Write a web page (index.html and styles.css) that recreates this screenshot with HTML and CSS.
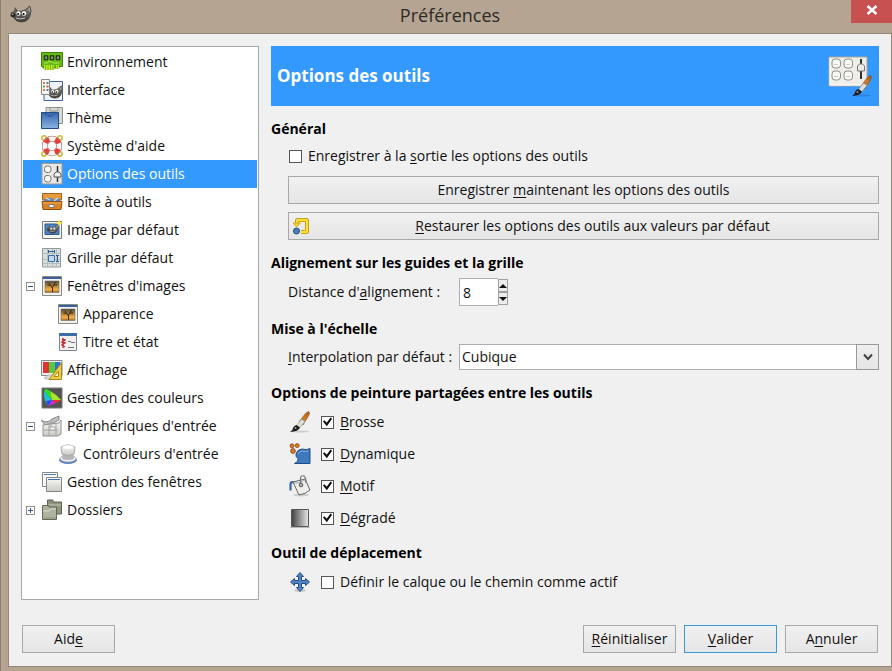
FILE: index.html
```html
<!DOCTYPE html>
<html lang="fr">
<head>
<meta charset="utf-8">
<title>Préférences</title>
<link rel="stylesheet" href="styles.css">
</head>
<body>
<svg class="defs" aria-hidden="true">
  <defs>
    <linearGradient id="fur" x1="0" y1="0" x2="0" y2="1"><stop offset="0" stop-color="#8a8782"/><stop offset="1" stop-color="#3c3a37"/></linearGradient>
    <linearGradient id="blue" x1="0" y1="0" x2="0" y2="1"><stop offset="0" stop-color="#3468ae"/><stop offset="1" stop-color="#8cb3e2"/></linearGradient>
    <linearGradient id="metal" x1="0" y1="0" x2="0" y2="1"><stop offset="0" stop-color="#fbfbf9"/><stop offset="1" stop-color="#c9cbc6"/></linearGradient>
    <linearGradient id="sunset" x1="0" y1="0" x2="0" y2="1"><stop offset="0" stop-color="#4d4a45"/><stop offset=".45" stop-color="#b98534"/><stop offset=".75" stop-color="#f5b243"/><stop offset="1" stop-color="#9b6420"/></linearGradient>
    <linearGradient id="ramp"><stop offset="0" stop-color="#404040"/><stop offset="1" stop-color="#e8e8e8"/></linearGradient>
    <linearGradient id="wood" x1="0" y1="1" x2="1" y2="0"><stop offset="0" stop-color="#8c4a14"/><stop offset=".5" stop-color="#cf7c2c"/><stop offset="1" stop-color="#a55a17"/></linearGradient>
    <symbol id="wilber" viewBox="0 0 22 22">
      <path d="M3 9Q5 7 7 8Q11 9 15 7Q17 5 20 3Q22 8 20 13Q18 19 11 19Q6 19 3 14Q0 14 1 11Q1 9 3 9Z" fill="url(#fur)" stroke="#3d3b38" stroke-width=".7"/>
      <path d="M4 8L5 4L8 8Z" fill="#5c5853"/>
      <path d="M18 7L20 4L20 9Z" fill="#aaa7a1"/>
      <ellipse cx="8.500" cy="10.500" rx="2" ry="2.200" fill="#fff"/><ellipse cx="14" cy="10.500" rx="2.200" ry="2.300" fill="#fff"/>
      <circle cx="8.200" cy="11" r="1"/><circle cx="13.600" cy="11" r="1.100"/>
      <ellipse cx="3.300" cy="12" rx="2.200" ry="2" fill="#222"/><circle cx="2.800" cy="11.300" r=".7" fill="#ddd"/>
      <path d="M6 15Q10 17 15 15" fill="none" stroke="#c9c5bd"/>
    </symbol>
    <symbol id="brush" viewBox="0 0 22 22">
      <ellipse cx="11" cy="20.500" rx="9" ry="1" fill="#000" opacity=".15"/>
      <path d="M19.500 .5Q21 1 20 4L14 14L10 11L16 3Q18 1 19.500 .5Z" fill="url(#wood)" stroke="#87501f" stroke-width=".6"/>
      <path d="M12.500 8L16 10.500L10.500 17L7.500 14.500Z" fill="#dfdfda" stroke="#8b8b86" stroke-width=".6"/>
      <path d="M7.500 14L11 16.500Q9.500 20.500 1 21Q4 19.500 4.200 16.500Q5 14.500 7.500 14Z" fill="#1e1e1e"/>
      <circle cx="6.500" cy="17" r="1" fill="#999"/>
    </symbol>
    <symbol id="picture" viewBox="0 0 22 22">
      <path d="M1.500 1.500H20.500V20.500H1.500Z" fill="#f2f2ef" stroke="#888a85"/><path d="M2 2H20V4H2Z" fill="#38609d"/>
      <path d="M4 6H18V17.500H4Z" fill="url(#sunset)" stroke="#77706a" stroke-width=".6"/>
      <path d="M11.500 17V12M11.500 13L8 8M11.500 12L14.500 7M9.500 10.500L6.500 10M13 10H16" stroke="#2c2114" stroke-width=".9" fill="none"/>
    </symbol>
    <symbol id="env" viewBox="0 0 22 22">
      <path d="M.5 1.500H21.500V15.500H18V17H2V15.500H.5Z" fill="#67b914" stroke="#3f820c"/>
      <path d="M3 4.500H7V9H3ZM9 4.500H13V9H9ZM15 4.500H19V9H15Z" fill="#2d3d24" stroke="#173609" stroke-width=".6"/>
      <path d="M5 5.500V8M11 5.500V8M17 5.500V8" stroke="#e6efdc"/><path d="M3 12H6L8 10.500H10L12 12H18" fill="none" stroke="#b5e455"/>
      <path d="M3 14H13V19H3ZM15 14H18V18H15Z" fill="#b8e92b"/><path d="M4.500 14V19M7 14V19M9.500 14V19M12 14V19M16.500 14V18" stroke="#5a9a10" stroke-width=".6"/>
    </symbol>
    <symbol id="interface" viewBox="0 0 22 22">
      <path d="M3 2.500H21.500V21.500H3Z" fill="#edf2f8" stroke="#42658f"/><use href="#wilber" x="5" y="4" width="17" height="18"/>
      <path d="M.5 .5H8.500V15.500H.5Z" fill="#f4f4f1" stroke="#888a85"/>
      <path d="M2 3H4V5H2ZM2 10H4V12H2Z" fill="#dd7b38"/><path d="M5.500 3H7.500V5H5.500ZM5.500 10H7.500V12H5.500Z" fill="#4b79b8"/><path d="M2 6.500H4V8.500H2Z" fill="#75a45c"/><path d="M5.500 6.500H7.500V8.500H5.500Z" fill="#cf5555"/>
    </symbol>
    <symbol id="theme" viewBox="0 0 22 22">
      <path d="M5 .5H21.500V16.500H5Z" fill="#d6d8d2" stroke="#8f918c"/><path d="M9 1V4H17V1M11 5H15" fill="none" stroke="#9a9c96"/>
      <path d="M.5 5.500H17.500V21.500H.5Z" fill="url(#blue)" stroke="#244b7d"/><path d="M4.500 5.500V8H13.500V5.500M7 9.500H11" fill="none" stroke="#2b5793" stroke-width=".8"/>
    </symbol>
    <symbol id="help" viewBox="0 0 22 22">
      <g fill="none" stroke="#d6b72e" stroke-width="1.500"><circle cx="3" cy="3" r="2.200"/><circle cx="19" cy="3" r="2.200"/><circle cx="3" cy="19" r="2.200"/><circle cx="19" cy="19" r="2.200"/></g>
      <circle cx="11" cy="11" r="7.200" fill="none" stroke="#8b5a57" stroke-width="6"/><circle cx="11" cy="11" r="7.200" fill="none" stroke="#f6f3f0" stroke-width="5"/>
      <circle cx="11" cy="11" r="7.200" fill="none" stroke="#e63f3a" stroke-width="4.800" stroke-dasharray="5.200 6.110" stroke-dashoffset="-3.055"/>
    </symbol>
    <symbol id="options" viewBox="0 0 22 22">
      <path d="M1 .5H21V21H1Z" fill="#e8e8e4" stroke="#9b9b93"/><rect x="3.500" y="3" width="6.500" height="6.500" rx="2.500" fill="#f8f8f6" stroke="#777"/><rect x="3.500" y="12.500" width="6.500" height="6.500" rx="2.500" fill="#f8f8f6" stroke="#777"/>
      <path d="M16.500 3V19" stroke="#333" stroke-width="1.500"/><path d="M13 14V11L15 9H18L20 11V14Z" fill="#eee" stroke="#555"/>
    </symbol>
    <symbol id="toolbox" viewBox="0 0 22 22">
      <path d="M1.500 2.500H20.500V9H1.500Z" fill="#e49b3d" stroke="#a26018"/><path d="M2 11L5 7H10L13 8.500L18 7L20 11Z" fill="#5d87bd"/><path d="M5 7L9 9M17 7L13 10" stroke="#d9dcde" stroke-width="1.200"/>
      <path d="M1 10.500H21L20 18.500H2Z" fill="#d8852a" stroke="#955111"/><path d="M8 16.500V13.500H13V16.500Z" fill="#eee" stroke="#8c7c68"/><path d="M2 12H20" stroke="#efad59"/>
    </symbol>
    <symbol id="image" viewBox="0 0 22 22">
      <path d="M1.500 2.500H20.500V19.500H1.500Z" fill="#f4f4f1" stroke="#777a76"/><path d="M4 5H18V15.500H4Z" fill="#4c83c4" stroke="#32588b"/><use href="#wilber" x="5" y="4" width="13" height="12"/>
      <path d="M18 0L19 3L22 4L19 5L18 8L17 5L14 4L17 3Z" fill="#fce94f"/>
    </symbol>
    <symbol id="grid" viewBox="0 0 22 22">
      <path d="M1.500 1.500H19.500V20H1.500Z" fill="#d9dfdf" stroke="#929b99"/><path d="M2 6.500H19M2 12.500H19M2 16.500H19M6.500 2V20M11.500 2V20M15.500 2V20" stroke="#b4bcbb"/><path d="M7.500 8.500H13.500V14.500H7.500Z" fill="#c5d8ed" stroke="#376da9"/><path d="M7 4.500H14M7.500 3V6M13.500 3V6M16.500 8V14M15 8.500H18M15 14.500H18" stroke="#285c9a" fill="none"/>
    </symbol>
    <symbol id="titlebar" viewBox="0 0 22 22">
      <path d="M2.500 2.500H19.500V19.500H2.500Z" fill="#f0f0f1" stroke="#7f848b"/><path d="M2 2H20V5H2Z" fill="#3d6da9"/><path d="M5 8L8 9L5 11L8 12L5 14L8 16M6 7V17" stroke="#cc2531" fill="none" stroke-width="1.400"/><path d="M11 10.500H14M14 11.500H18M11 16.500H17" stroke="#71757b"/>
    </symbol>
    <symbol id="display" viewBox="0 0 22 22">
      <path d="M.5 1.500H21V16.500H.5Z" fill="#eee" stroke="#888"/><path d="M2 3H8V14H2Z" fill="#e33434"/><path d="M8 3H14V14H8Z" fill="#59c941"/><path d="M14 3H19.500V14H14Z" fill="#3674cc"/><path d="M3 19L7 16H14V20H4Z" fill="#d9d9d6" stroke="#999" stroke-width=".5"/>
      <path d="M20.500 4V20.500H8Z" fill="#efcd45" stroke="#a8871c"/><path d="M17.500 12V17.500H13Z" fill="#fff5bd" stroke="#a8871c"/>
    </symbol>
    <symbol id="color" viewBox="0 0 22 22">
      <path d="M1 1H21V21H1Z" fill="#535353" stroke="#777"/><path d="M3 4Q4 0 9 4L11 13Z" fill="#27df24"/><path d="M9 4Q15 7 20 13L11 13Z" fill="#a7e723"/><path d="M11 13L20 13L15 16Z" fill="#f13325"/><path d="M11 13L15 16L7 19Z" fill="#d329d9"/><path d="M11 13L7 19Q2 12 3 4Z" fill="#26bdd3"/><path d="M11 13L7 19L5 14Z" fill="#2843ef"/>
    </symbol>
    <symbol id="device" viewBox="0 0 22 22">
      <path d="M0 5Q6 9 11 4L18 1V5L12 8L4 10Z" fill="#bfc0bd" stroke="#8a8a8a"/><path d="M2 10L18 8L20 5V19L17 21H2Z" fill="url(#metal)" stroke="#90918e"/><path d="M8 10V21M15 9V20M3 15H17M10 5V12" stroke="#a4a5a1"/><path d="M9 12H14V15H9Z" fill="#fafafa" stroke="#aaa"/>
    </symbol>
    <symbol id="controller" viewBox="0 0 22 22">
      <ellipse cx="11" cy="17" rx="9" ry="4" fill="#5f83c2"/><ellipse cx="11" cy="15.500" rx="8" ry="3.500" fill="#edf0f4" stroke="#999" stroke-width=".6"/><path d="M6 10H16L17 16Q11 18 5 16Z" fill="#b5b5b5"/><path d="M4 4Q11 0 18 4L17 11Q11 14 5 11Z" fill="url(#metal)" stroke="#aaa"/><ellipse cx="11" cy="4" rx="5.500" ry="1.800" fill="#fff"/>
    </symbol>
    <symbol id="windows" viewBox="0 0 22 22">
      <path d="M1.500 1.500H16.500V15.500H1.500Z" fill="#fafafa" stroke="#858783"/><path d="M3 3.500H15" stroke="#557ca9"/><path d="M5.500 6.500H20.500V20.500H5.500Z" fill="url(#metal)" stroke="#858783"/><path d="M7 8.500H19" stroke="#3f70af"/>
    </symbol>
    <symbol id="folders" viewBox="0 0 22 22">
      <path d="M6.500 4V1H12V3H20.500V15H6.500Z" fill="#8f947f" stroke="#5d6152"/><path d="M7 6H20" stroke="#c4c7b7"/><path d="M1.500 9V6.500H8V8H15.500V20.500H1.500Z" fill="#aeb39e" stroke="#636854"/><path d="M2 12H8L10 10H15" stroke="#dde0d1" fill="none"/><path d="M3 19H15" stroke="#88907a"/>
    </symbol>
    <symbol id="reset" viewBox="0 0 18 18">
      <path d="M5 8V4Q5 3 6 3H14Q15 3 15 4V14Q15 15 14 15H9" fill="none" stroke="#b79200" stroke-width="4"/><path d="M5 8V4Q5 3 6 3H14Q15 3 15 4V14Q15 15 14 15H9" fill="none" stroke="#ffe03b" stroke-width="2.400"/><path d="M1 6H8.500L4.500 10Z" fill="#f8d62d" stroke="#b79200" stroke-width=".6"/><circle cx="4.500" cy="14" r="3" fill="#4c7ebd" stroke="#294e80"/>
    </symbol>
    <symbol id="dynamics" viewBox="0 0 22 22">
      <path d="M7 11Q8 6.500 13 6Q18 7.500 21 5.500V20.500H5.500Q10 18.500 9 15.500Q6.500 14 7 11Z" fill="#3e78bd" stroke="#1e4c88"/><path d="M9 11Q10 8 13 8Q17 9 19.500 8" stroke="#80a9db" fill="none"/><g fill="#d77b25" stroke="#874410" stroke-width=".8"><circle cx="3" cy="2.800" r="2"/><circle cx="8.200" cy="2.600" r="2"/><circle cx="4" cy="8" r="2.400"/></g>
    </symbol>
    <symbol id="bucket" viewBox="0 0 22 22">
      <ellipse cx="12" cy="20" rx="8" ry="1.500" fill="#000" opacity=".14"/><path d="M5 7.500Q1.500 6.500 1.500 9V15.500" fill="none" stroke="#3767a5" stroke-width="2.200"/><path d="M4 7L16 4L21 15Q17 19 10 20Z" fill="#eeeeeb" stroke="#666"/><path d="M5 8Q10 9 16 5" fill="none" stroke="#aaa"/><path d="M11.500 10V3Q12 0 15 1Q17 2 17 8" fill="none" stroke="#777" stroke-width="1.200"/><circle cx="12" cy="10" r="1.800" fill="#bbb" stroke="#555"/>
    </symbol>
    <symbol id="gradient" viewBox="0 0 22 22"><path d="M1 20H21V21H1Z" fill="#bbb"/><path d="M2.500 2.500H19.500V19.500H2.500Z" fill="url(#ramp)" stroke="#555"/></symbol>
    <symbol id="move" viewBox="0 0 22 22">
      <ellipse cx="11" cy="19.500" rx="6" ry="1.500" fill="#000" opacity=".18"/><path d="M11 1.500L14.500 5.500H12.500V9.500H16.500V7.500L20.500 11L16.500 14.500V12.500H12.500V16.500H14.500L11 20.500L7.500 16.500H9.500V12.500H5.500V14.500L1.500 11L5.500 7.500V9.500H9.500V5.500H7.500Z" fill="#4f83c4" stroke="#274f87"/>
    </symbol>
    <symbol id="panel" viewBox="0 0 46 44">
      <path d="M2 3H40V32H2Z" fill="#efeee9" stroke="#aaa79c"/><path d="M3 31H39M3 4V31" stroke="#fff"/>
      <g fill="#f8f8f6" stroke="#77756f" stroke-width=".8"><rect x="5" y="5" width="8.500" height="9" rx="3"/><rect x="17" y="5" width="8.500" height="9" rx="3"/><rect x="5" y="17" width="8.500" height="9" rx="3"/><rect x="17" y="17" width="8.500" height="9" rx="3"/></g>
      <path d="M7 10.500H11M19 10.500H23M7 22.500H11M19 22.500H23" stroke="#ccc"/><path d="M34 5V25" stroke="#30302e" stroke-width="2"/><path d="M30.500 17V12L32.500 10H35.500L37.500 12V17Z" fill="#ecece8" stroke="#777"/>
      <use href="#brush" x="24" y="21" width="22" height="22"/>
    </symbol>
  </defs>
</svg>
<div class="window">
  <header class="titlebar">
    <svg class="icon" aria-hidden="true"><use href="#wilber"/></svg>
    <h1>Préférences</h1>
    <button class="close" type="button" aria-label="Fermer"><svg viewBox="0 0 12 10" aria-hidden="true"><path d="M1.500 1L10.500 9M10.500 1L1.500 9"/></svg></button>
  </header>
  <main class="client">
    <div class="body">
      <nav class="tree" aria-label="Catégories">
        <ul>
          <li class="row"><a href="#"><svg class="icon"><use href="#env"/></svg>Environnement</a></li>
          <li class="row"><a href="#"><svg class="icon"><use href="#interface"/></svg>Interface</a></li>
          <li class="row"><a href="#"><svg class="icon"><use href="#theme"/></svg>Thème</a></li>
          <li class="row"><a href="#"><svg class="icon"><use href="#help"/></svg>Système d'aide</a></li>
          <li class="row selected"><a href="#" aria-current="page"><svg class="icon"><use href="#options"/></svg>Options des outils</a></li>
          <li class="row"><a href="#"><svg class="icon"><use href="#toolbox"/></svg>Boîte à outils</a></li>
          <li class="row"><a href="#"><svg class="icon"><use href="#image"/></svg>Image par défaut</a></li>
          <li class="row"><a href="#"><svg class="icon"><use href="#grid"/></svg>Grille par défaut</a></li>
          <li class="row"><button class="twisty" type="button" aria-expanded="true" aria-label="Replier"></button><a href="#"><svg class="icon"><use href="#picture"/></svg>Fenêtres d'images</a></li>
          <li class="row child"><a href="#"><svg class="icon"><use href="#picture"/></svg>Apparence</a></li>
          <li class="row child"><a href="#"><svg class="icon"><use href="#titlebar"/></svg>Titre et état</a></li>
          <li class="row"><a href="#"><svg class="icon"><use href="#display"/></svg>Affichage</a></li>
          <li class="row"><a href="#"><svg class="icon"><use href="#color"/></svg>Gestion des couleurs</a></li>
          <li class="row"><button class="twisty" type="button" aria-expanded="true" aria-label="Replier"></button><a href="#"><svg class="icon"><use href="#device"/></svg>Périphériques d'entrée</a></li>
          <li class="row child"><a href="#"><svg class="icon"><use href="#controller"/></svg>Contrôleurs d'entrée</a></li>
          <li class="row"><a href="#"><svg class="icon"><use href="#windows"/></svg>Gestion des fenêtres</a></li>
          <li class="row"><button class="twisty" type="button" aria-expanded="false" aria-label="Déplier"></button><a href="#"><svg class="icon"><use href="#folders"/></svg>Dossiers</a></li>
        </ul>
      </nav>
      <form class="page" id="prefs">
        <div class="banner"><h2>Options des outils</h2><svg aria-hidden="true"><use href="#panel"/></svg></div>
        <section>
          <h3>Général</h3>
          <div class="stack">
            <div class="check"><input type="checkbox" id="save"><label for="save">Enregistrer à la <u>s</u>ortie les options des outils</label></div>
            <button class="btn" type="button">Enregistrer <u>m</u>aintenant les options des outils</button>
            <button class="btn with-icon" type="button"><svg aria-hidden="true"><use href="#reset"/></svg><span><u>R</u>estaurer les options des outils aux valeurs par défaut</span></button>
          </div>
        </section>
        <section>
          <h3>Alignement sur les guides et la grille</h3>
          <div class="field"><label for="snap">Distance d'<u>a</u>lignement :</label>
            <div class="spin"><input id="snap" type="text" inputmode="numeric" value="8"><div class="steps"><button type="button" aria-label="Augmenter"></button><button type="button" aria-label="Diminuer"></button></div></div>
          </div>
        </section>
        <section>
          <h3>Mise à l'échelle</h3>
          <div class="field"><label for="interp"><u>I</u>nterpolation par défaut :</label>
            <div class="combo"><select id="interp"><option>Cubique</option></select><span class="arrow"><svg viewBox="0 0 10 8" aria-hidden="true"><path d="M1 1.500L5 6L9 1.500"/></svg></span></div>
          </div>
        </section>
        <section>
          <h3>Options de peinture partagées entre les outils</h3>
          <div class="stack checks">
            <div class="check"><svg class="icon"><use href="#brush"/></svg><input type="checkbox" id="b" checked><label for="b"><u>B</u>rosse</label></div>
            <div class="check"><svg class="icon"><use href="#dynamics"/></svg><input type="checkbox" id="d" checked><label for="d"><u>D</u>ynamique</label></div>
            <div class="check"><svg class="icon"><use href="#bucket"/></svg><input type="checkbox" id="m" checked><label for="m"><u>M</u>otif</label></div>
            <div class="check"><svg class="icon"><use href="#gradient"/></svg><input type="checkbox" id="g" checked><label for="g"><u>D</u>égradé</label></div>
          </div>
        </section>
        <section>
          <h3>Outil de déplacement</h3>
          <div class="stack checks">
            <div class="check"><svg class="icon"><use href="#move"/></svg><input type="checkbox" id="mv"><label for="mv">Définir le calque ou le chemin comme actif</label></div>
          </div>
        </section>
      </form>
    </div>
    <footer class="actions">
      <button class="btn help" type="button">Aid<u>e</u></button>
      <button class="btn" type="reset" form="prefs"><u>R</u>éinitialiser</button>
      <button class="btn default" type="submit" form="prefs"><u>V</u>alider</button>
      <button class="btn" type="button">A<u>n</u>nuler</button>
    </footer>
  </main>
</div>
</body>
</html>
```
FILE: styles.css
```css
* { box-sizing: border-box; }
body {
  margin: 0;
  background: #b5a492;
  color: #111;
  font: 14px/20px "Open Sans", "Noto Sans", sans-serif;
}
button, input, select { font: inherit; color: inherit; margin: 0; padding: 0; border-radius: 0; }
u { text-decoration: underline; text-underline-offset: 2px; text-decoration-skip-ink: none; }
.defs { position: absolute; width: 0; height: 0; }
.icon { width: 22px; height: 22px; flex: none; display: block; }

.window {
  display: flex;
  flex-direction: column;
  min-height: 100vh;
  padding: 0 0 4px 7px;
  border-left: 1px solid #8c7c6d;
}
.titlebar {
  display: grid;
  grid-template-columns: 41px 1fr 41px;
  height: 33px;
}
.titlebar .icon { margin: 3px 0 0 2px; }
.titlebar h1 {
  margin: 0;
  font-size: 18px;
  font-weight: 400;
  line-height: 30px;
  text-align: center;
  color: #2e2a27;
}
.close { height: 23px; border: 0; padding-bottom: 3px; background: #c75050; display: grid; place-items: center; }
.close svg { width: 12px; height: 10px; fill: none; stroke: #fff; stroke-width: 2.5; }

.client {
  flex: 1;
  display: flex;
  flex-direction: column;
  gap: 25px;
  padding: 12px 12px 13px;
  border: 1px solid #96877a;
  background: #f0f0f0;
}
.body { flex: 1; display: flex; gap: 12px; }

.tree { flex: 0 0 238px; padding: 1px; border: 1px solid #a5a9ae; background: #fff; }
.tree ul { margin: 0; padding: 0; list-style: none; }
.row { display: flex; align-items: center; height: 28px; padding-left: 3px; }
.row::before { content: ""; width: 15px; flex: none; }
.row:has(.twisty)::before { display: none; }
.row.child { padding-left: 19px; }
.row a { flex: 1; display: flex; align-items: center; gap: 4px; color: inherit; line-height: 22px; text-decoration: none; white-space: nowrap; }
.row.selected { background: #3399ff; color: #fff; }
.twisty {
  width: 9px;
  height: 9px;
  margin-right: 6px;
  border: 1px solid #919191;
  background: linear-gradient(#34568f, #34568f) center / 5px 1px no-repeat #fff;
}
.twisty[aria-expanded="false"] {
  background:
    linear-gradient(#34568f, #34568f) center / 5px 1px no-repeat,
    linear-gradient(#34568f, #34568f) center / 1px 5px no-repeat #fff;
}

.page { flex: 1; min-width: 0; display: flex; flex-direction: column; gap: 13px; }
.banner {
  display: flex;
  align-items: center;
  justify-content: space-between;
  height: 60px;
  padding: 0 6px;
  background: #3399ff;
  color: #fff;
}
.banner svg { width: 46px; height: 44px; }
h2 { margin: 0; font-size: 17px; font-weight: 700; }
h3 { margin: 0 0 5px; font-size: 14px; line-height: 20px; font-weight: 700; color: #000; }
.stack { display: flex; flex-direction: column; gap: 8px; padding-left: 17px; }
.checks { padding-top: 2px; }
.check { display: flex; align-items: center; gap: 6px; height: 24px; padding-left: 1px; }
.check .icon { margin-right: 4px; }
.check input {
  appearance: none;
  width: 13px;
  height: 13px;
  flex: none;
  border: 1px solid #555;
  background: #fff;
}
.check input:checked::after {
  content: "";
  display: block;
  width: 11px;
  height: 11px;
  background: #111;
  clip-path: polygon(9% 45%, 24% 34%, 42% 56%, 78% 8%, 92% 20%, 44% 88%);
}
.btn {
  height: 28px;
  border: 1px solid #a8a8a8;
  background: linear-gradient(#f1f1f1, #e5e5e5);
}
.with-icon { display: flex; align-items: center; padding: 0 3px; }
.with-icon svg { width: 18px; height: 18px; }
.with-icon span { flex: 1; }

.field { display: grid; grid-template-columns: 171px 1fr; align-items: center; padding-left: 17px; }
.spin { display: flex; align-items: center; height: 28px; }
.spin input { width: 39px; height: 28px; padding: 0 3px; border: 1px solid #abadb3; border-right: 0; background: #fff; }
.steps { display: flex; flex-direction: column; }
.steps button {
  display: grid;
  place-items: center;
  width: 10px;
  height: 13px;
  border: 1px solid #a0a0a0;
  background: #ececec;
}
.steps button::before { content: ""; border: 4px solid transparent; border-top-width: 0; border-bottom-color: #111; }
.steps button + button::before { border-width: 4px 4px 0; border-color: #111 transparent transparent; }
.combo { display: grid; height: 26px; }
.combo select, .combo .arrow { grid-area: 1 / 1; }
.combo select { appearance: none; width: 100%; padding: 0 24px 0 2px; border: 1px solid #abadb3; background: #fff; }
.combo .arrow {
  justify-self: end;
  display: grid;
  place-items: center;
  width: 23px;
  border: 1px solid #999;
  background: linear-gradient(#f0f0f0, #e5e5e5);
  pointer-events: none;
}
.arrow svg { width: 10px; height: 8px; fill: none; stroke: #444; stroke-width: 2; }

.actions { display: flex; gap: 8px; padding: 0 1px; }
.actions .btn { width: 93px; }
.actions .help { margin-right: auto; }
.actions .default { border-color: #3c9bd6; }
```
